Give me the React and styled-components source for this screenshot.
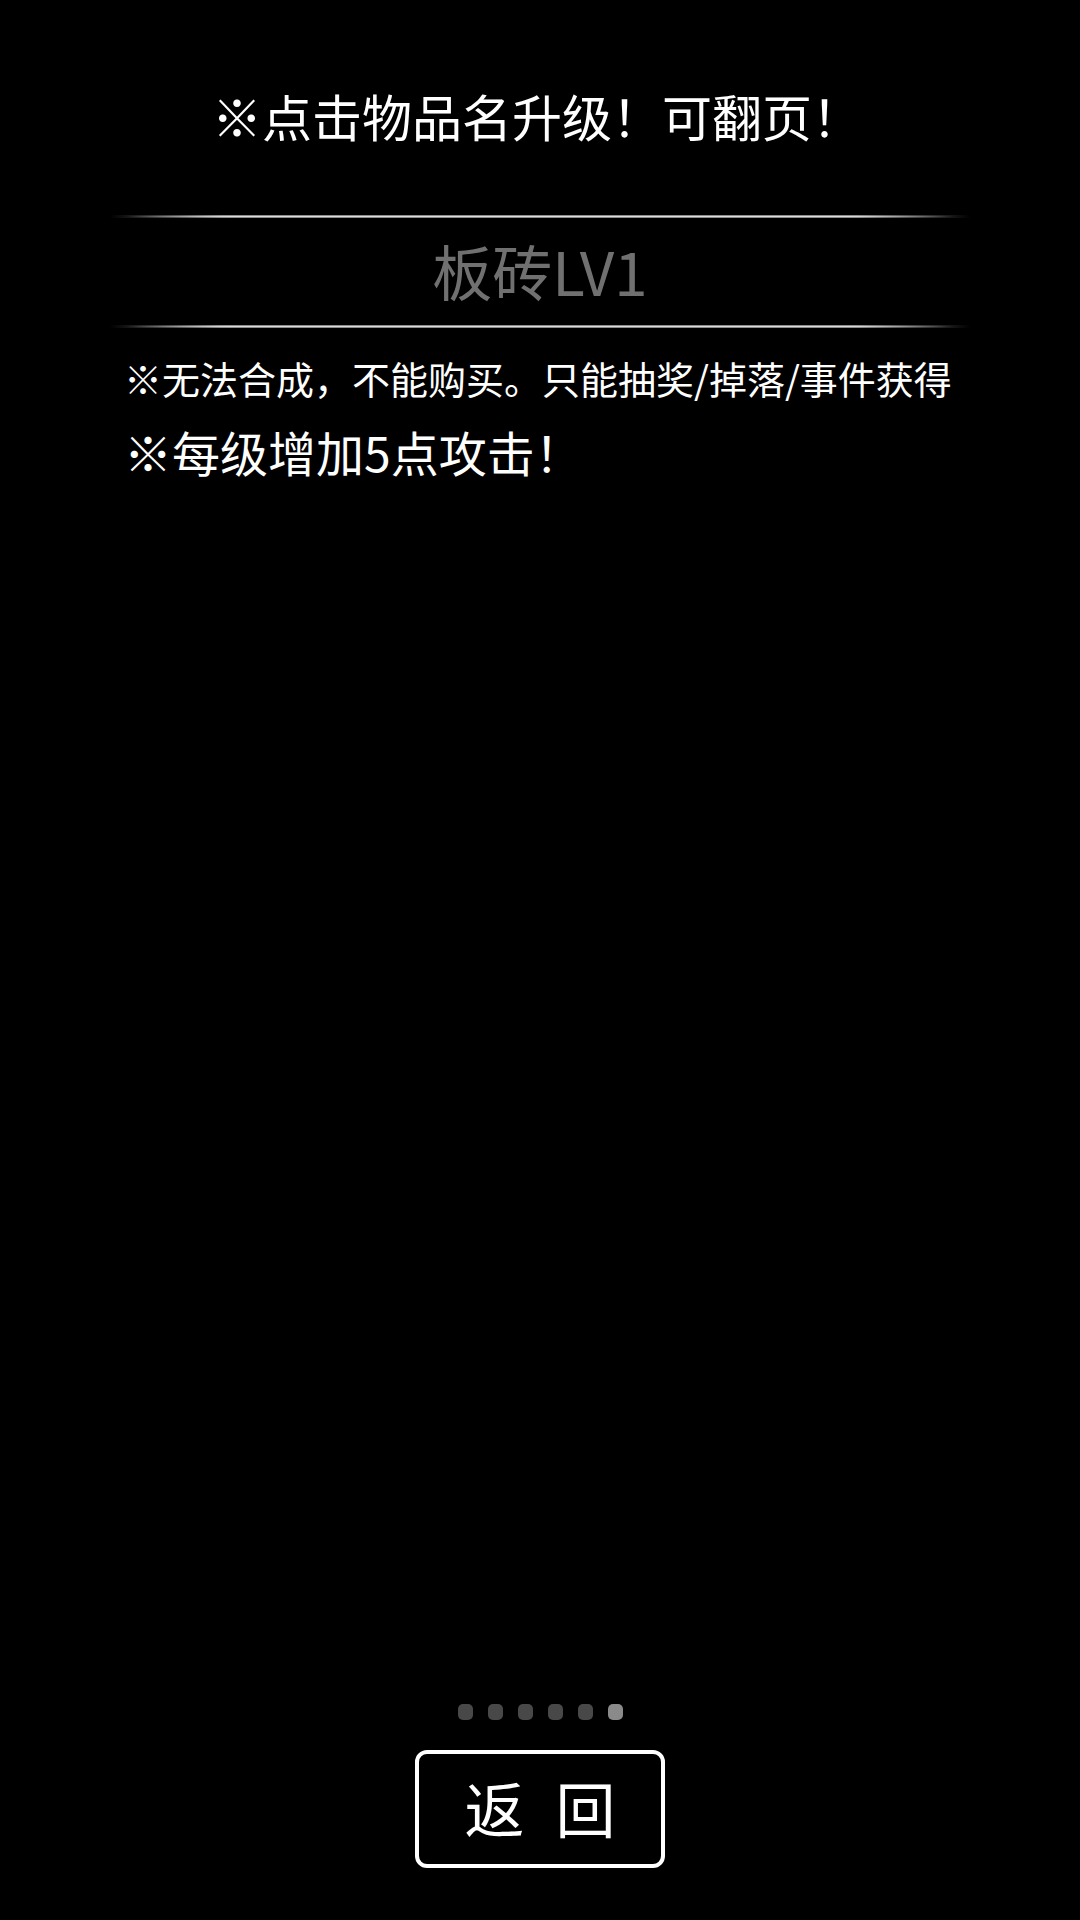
import React from 'react'
import styled, { createGlobalStyle } from 'styled-components'

const GlobalStyle = createGlobalStyle`
  html, body {
    margin: 0;
    padding: 0;
    background: #000;
  }
  * {
    box-sizing: border-box;
  }
`

const Screen = styled.div`
  width: 1080px;
  height: 1920px;
  background: #000;
  color: #fff;
  font-family: "Noto Sans CJK SC", "Noto Sans", sans-serif;
  display: flex;
  flex-direction: column;
  align-items: center;
  padding-bottom: 52px;
`

const Hint = styled.div`
  margin-top: 85px;
  font-size: 50px;
  line-height: 60px;
  text-align: center;
  margin-right: 6px;
`

const Panel = styled.div`
  width: 860px;
  margin-top: 70px;
  display: flex;
  flex-direction: column;
`

const Divider = styled.div`
  position: relative;
  height: 3px;
  background: linear-gradient(to right, rgba(150,150,150,0) 0%, #8c8c8c 13%, #8c8c8c 87%, rgba(150,150,150,0) 100%);

  &::after {
    content: "";
    position: absolute;
    left: 0;
    right: 0;
    top: 1px;
    height: 1px;
    background: linear-gradient(to right, rgba(230,230,230,0) 2%, #dcdcdc 14%, #dcdcdc 86%, rgba(230,230,230,0) 98%);
  }
`

const ItemName = styled.div`
  height: 107px;
  padding-bottom: 5px;
  display: flex;
  align-items: center;
  justify-content: center;
  font-size: 60px;
  color: #707070;
`

const Notes = styled.div`
  padding: 26px 0 0 14px;
  display: flex;
  flex-direction: column;
  gap: 20px;
`

const Note = styled.div`
  font-size: ${p => p.size}px;
  line-height: ${p => p.lh}px;
  white-space: nowrap;
`

const Spacer = styled.div`
  flex: 1;
`

const Dots = styled.div`
  display: flex;
  gap: 15px;
  margin-bottom: 30px;
`

const Dot = styled.span`
  width: 15px;
  height: 16px;
  border-radius: 5px;
  background: ${p => (p.active ? '#8a8a8a' : '#484848')};
`

const BackButton = styled.button`
  width: 250px;
  height: 118px;
  background: #000;
  border: 4px solid #fff;
  border-radius: 12px;
  color: #fff;
  font-family: "Noto Sans CJK SC", sans-serif;
  font-size: 60px;
  display: flex;
  align-items: center;
  justify-content: center;
  gap: 31px;
  padding: 0 0 6px;
  cursor: pointer;
`

const pages = [0, 1, 2, 3, 4, 5]

export default function App() {
  const current = 5
  return (
    <>
      <GlobalStyle />
      <Screen>
        <Hint>※点击物品名升级！可翻页！</Hint>
        <Panel>
          <Divider />
          <ItemName>板砖LV1</ItemName>
          <Divider />
          <Notes>
            <Note size={38} lh={48}>※无法合成，不能购买。只能抽奖/掉落/事件获得</Note>
            <Note size={48} lh={58}>※每级增加5点攻击！</Note>
          </Notes>
        </Panel>
        <Spacer />
        <Dots>
          {pages.map(i => <Dot key={i} active={i === current} />)}
        </Dots>
        <BackButton>
          <span>返</span>
          <span>回</span>
        </BackButton>
      </Screen>
    </>
  )
}
